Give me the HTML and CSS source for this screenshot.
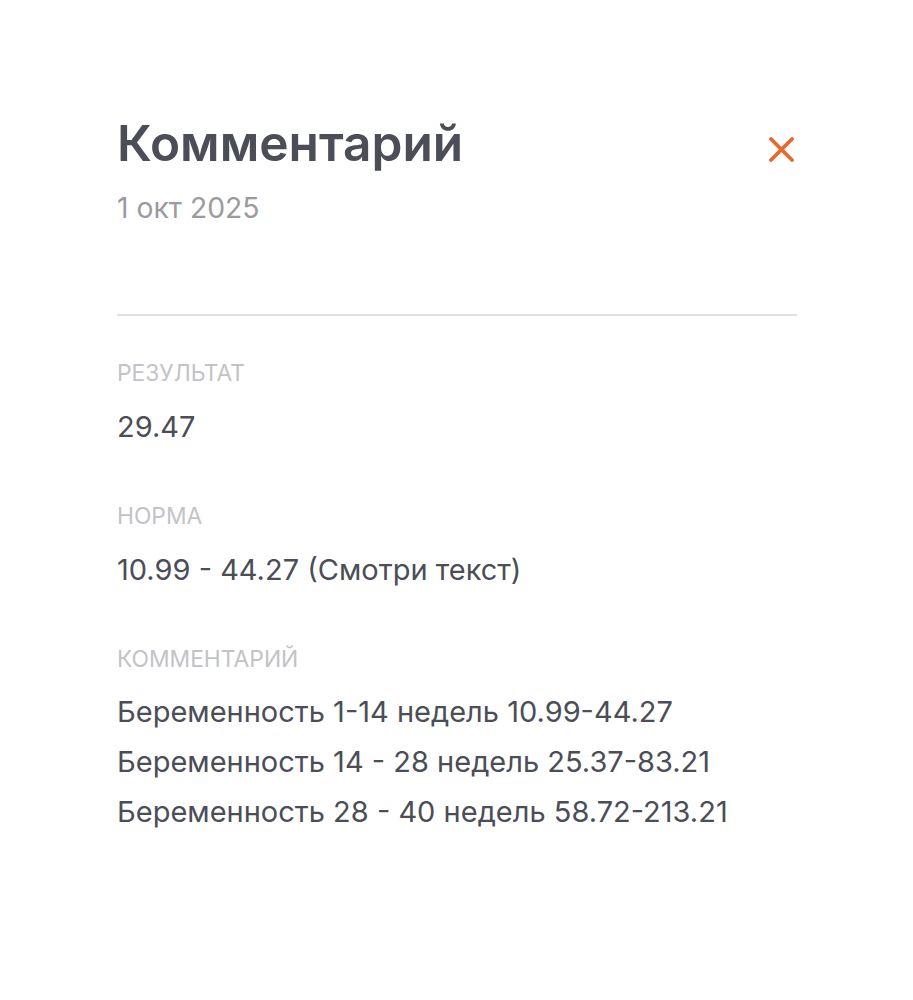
FILE: index.html
```html
<!DOCTYPE html>
<html lang="ru">
<head>
<meta charset="utf-8">
<title>Комментарий</title>
<link rel="stylesheet" href="styles.css">
</head>
<body>
<div class="sheet">
  <div class="header">
    <div class="heading">
      <h1 class="title">Комментарий</h1>
      <div class="date">1 окт 2025</div>
    </div>
    <button class="close" aria-label="Закрыть">
      <svg width="25" height="25" viewBox="0 0 25 25"><path d="M2 2 L23 23 M23 2 L2 23" stroke="#e8682f" stroke-width="3.8" stroke-linecap="round" fill="none"/></svg>
    </button>
  </div>
  <div class="divider"></div>
  <div class="field">
    <div class="label">РЕЗУЛЬТАТ</div>
    <div class="value">29.47</div>
  </div>
  <div class="field">
    <div class="label">НОРМА</div>
    <div class="value">10.99 - 44.27 (Смотри текст)</div>
  </div>
  <div class="field">
    <div class="label">КОММЕНТАРИЙ</div>
    <div class="comment">
      <div class="line">Беременность 1-14 недель 10.99-44.27</div>
      <div class="line">Беременность 14 - 28 недель 25.37-83.21</div>
      <div class="line">Беременность 28 - 40 недель 58.72-213.21</div>
    </div>
  </div>
</div>
</body>
</html>
```
FILE: styles.css
```css
html, body {
  margin: 0;
  padding: 0;
  background: #ffffff;
}
body {
  font-family: Inter, "Noto Sans", "Liberation Sans", sans-serif;
  color: #4b4d57;
}
.sheet {
  padding: 113px 116px 0 117px;
  display: flex;
  flex-direction: column;
}
.header {
  display: flex;
  justify-content: space-between;
  align-items: flex-start;
}
.title {
  margin: 0;
  font-size: 49.6px;
  line-height: 60px;
  font-weight: 600;
  color: #4b4d57;
}
.date {
  margin-top: 17px;
  font-size: 28.3px;
  line-height: 36px;
  color: #9a9a9f;
}
.close {
  margin: 24px 3px 0 0;
  padding: 0;
  border: 0;
  background: none;
  width: 25px;
  height: 25px;
  display: block;
}
.close svg { display: block; }
.divider {
  margin-top: 88px;
  height: 2px;
  background: #e0e0e3;
}
.field {
  display: flex;
  flex-direction: column;
  margin-top: 56px;
}
.divider + .field { margin-top: 42px; }
.label {
  font-size: 22.8px;
  line-height: 30px;
  color: #c3c3c7;
}
.value {
  margin-top: 21px;
  font-size: 29px;
  line-height: 36px;
  color: #4b4d57;
}
.comment {
  margin-top: 13px;
  display: flex;
  flex-direction: column;
}
.line {
  font-size: 29px;
  line-height: 50px;
  color: #4b4d57;
}
```
